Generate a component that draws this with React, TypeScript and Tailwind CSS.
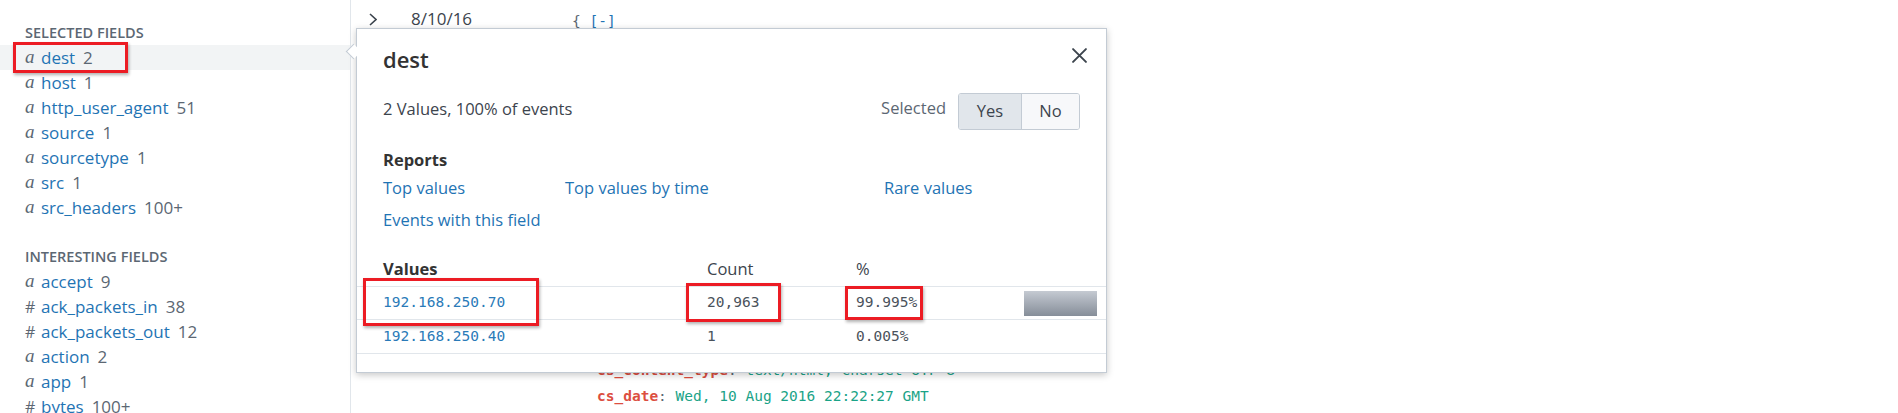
import React from "react";

const SANS = "font-['Open_Sans',sans-serif]";
const MONO = "font-['DejaVu_Sans_Mono',monospace]";

type Field = { type: "a" | "#"; name: string; count: string };

const selectedFields: Field[] = [
  { type: "a", name: "dest", count: "2" },
  { type: "a", name: "host", count: "1" },
  { type: "a", name: "http_user_agent", count: "51" },
  { type: "a", name: "source", count: "1" },
  { type: "a", name: "sourcetype", count: "1" },
  { type: "a", name: "src", count: "1" },
  { type: "a", name: "src_headers", count: "100+" },
];

const interestingFields: Field[] = [
  { type: "a", name: "accept", count: "9" },
  { type: "#", name: "ack_packets_in", count: "38" },
  { type: "#", name: "ack_packets_out", count: "12" },
  { type: "a", name: "action", count: "2" },
  { type: "a", name: "app", count: "1" },
  { type: "#", name: "bytes", count: "100+" },
];

const FieldRow = ({ field, active }: { field: Field; active?: boolean }) => (
  <div
    className={`flex items-center h-[25px] pl-[25px] text-[17px] ${
      active ? "bg-[#f2f4f5]" : ""
    }`}
  >
    <span
      className={`w-[16px] text-[#5c6773] ${
        field.type === "a"
          ? "font-['Liberation_Serif',serif] italic text-[19px]"
          : "text-[16px]"
      }`}
    >
      {field.type}
    </span>
    <span className="text-[#1f74b4]">{field.name}</span>
    <span className="ml-[8px] text-[#5c6773]">{field.count}</span>
  </div>
);

const SectionTitle = ({ children }: { children: React.ReactNode }) => (
  <div className="h-[25px] flex items-center pl-[25px] text-[14.5px] font-semibold uppercase text-[#5c6773]">
    {children}
  </div>
);

const RedBox = ({ className }: { className: string }) => (
  <div
    className={`absolute border-[3px] border-[#ec1c24] shadow-[1px_2px_3px_rgba(0,0,0,0.3)] pointer-events-none ${className}`}
  />
);

const JsonLine = ({ k, v }: { k: string; v: string }) => (
  <div className="h-[26px] leading-[26px] whitespace-pre">
    <span className="text-[#dc4e41] font-semibold">{k}</span>
    <span className="text-[#5c6773]">: </span>
    <span className="text-[#1aa387]">{v}</span>
  </div>
);

const Popover = () => (
  <div className="absolute left-[356px] top-[28px] w-[751px] h-[345px] bg-white border border-[#c3cbd4] shadow-[0_2px_7px_rgba(0,0,0,0.22)] z-10">
    {/* arrow pointing at the selected field */}
    <div className="absolute left-[-9px] top-[17px] w-[11px] h-[11px] rotate-45 bg-white border-l border-b border-[#c3cbd4]" />

    <button className="absolute right-[19px] top-[19px] w-[15px] h-[15px] text-[#3c444d]">
      <svg viewBox="0 0 14 14" className="w-full h-full">
        <path d="M1 1 L13 13 M13 1 L1 13" stroke="currentColor" strokeWidth="1.8" strokeLinecap="round" />
      </svg>
    </button>

    <div className="px-[26px]">
      <div className="pt-[16px] h-[44px] text-[22px] leading-[28px] font-semibold text-[#333]">dest</div>

      <div className="mt-[20px] flex items-center justify-between h-[37px]">
        <span className="text-[16.5px] text-[#3c444d] mb-[5px]">2 Values, 100% of events</span>
        <div className="flex items-center">
          <span className="text-[16.5px] text-[#5c6773] mr-[12px] mb-[6px]">Selected</span>
          <div className="flex h-[37px] rounded-[3px] border border-[#c3cbd4] overflow-hidden text-[16.5px] text-[#3c444d]">
            <div className="w-[63px] flex items-center justify-center bg-[#e1e6eb] border-r border-[#c3cbd4]">Yes</div>
            <div className="w-[57px] flex items-center justify-center bg-[#f7f8fa]">No</div>
          </div>
        </div>
      </div>

      <div className="mt-[18px] h-[24px] leading-[24px] text-[16.5px] font-bold text-[#333]">Reports</div>
      <div className="mt-[4px] grid grid-cols-[182px_319px_1fr] gap-y-[8px] text-[16.5px] leading-[24px] text-[#1f74b4]">
        <span>Top values</span>
        <span>Top values by time</span>
        <span>Rare values</span>
        <span>Events with this field</span>
      </div>
    </div>

    <div className="mt-[21px]">
      <div className="grid grid-cols-[350px_149px_168px_73px_1fr] h-[34px] items-center border-b border-[#e1e6eb] text-[16.5px] text-[#3c444d]">
        <span className="pl-[26px] font-bold text-[#333]">Values</span>
        <span>Count</span>
        <span>%</span>
        <span />
        <span />
      </div>
      {[
        { v: "192.168.250.70", c: "20,963", p: "99.995%", w: 100 },
        { v: "192.168.250.40", c: "1", p: "0.005%", w: 0 },
      ].map((r, i) => (
        <div
          key={r.v}
          className={`grid grid-cols-[350px_149px_168px_73px_1fr] items-center border-b border-[#e1e6eb] text-[14.5px] ${MONO} ${
            i === 0 ? "h-[33px]" : "h-[34px]"
          }`}
        >
          <span className="pl-[26px] text-[#2a7ab8]">{r.v}</span>
          <span className="text-[#4a525b]">{r.c}</span>
          <span className="text-[#4a525b]">{r.p}</span>
          <span className="h-[25px] flex">
            {r.w > 0 && (
              <span
                className="h-full bg-gradient-to-b from-[#c5cad2] to-[#868e99]"
                style={{ width: `${r.w}%` }}
              />
            )}
          </span>
          <span />
        </div>
      ))}
    </div>
  </div>
);

export default function App() {
  return (
    <div className={`relative w-[1898px] h-[413px] overflow-hidden bg-white flex ${SANS}`}>
      <aside className="w-[351px] shrink-0 border-r border-[#e1e6eb] pt-[20px]">
        <SectionTitle>Selected Fields</SectionTitle>
        {selectedFields.map((f, i) => (
          <FieldRow key={f.name} field={f} active={i === 0} />
        ))}
        <div className="h-[24px]" />
        <SectionTitle>Interesting Fields</SectionTitle>
        {interestingFields.map((f) => (
          <FieldRow key={f.name} field={f} />
        ))}
      </aside>

      <main className="flex-1 flex flex-col">
        <div className="h-[38px] flex items-center pl-[18px]">
          <svg viewBox="0 0 8 13" className="w-[8px] h-[13px] text-[#3c444d]">
            <path d="M1 1 L7 6.5 L1 12" fill="none" stroke="currentColor" strokeWidth="1.6" />
          </svg>
          <span className="ml-[34px] w-[161px] text-[17px] text-[#3c444d]">8/10/16</span>
          <span className={`${MONO} text-[14.5px] mt-[6px] text-[#5c6773] whitespace-pre`}>
            {"{ "}
            <span className="text-[#1f74b4]">[-]</span>
          </span>
        </div>
        <div className="h-[319px]" />
        <div className={`${MONO} text-[14.5px] pl-[246px]`}>
          <JsonLine k="cs_content_type" v="text/html; charset=UTF-8" />
          <JsonLine k="cs_date" v="Wed, 10 Aug 2016 22:22:27 GMT" />
        </div>
      </main>

      <Popover />

      <RedBox className="left-[13px] top-[42px] w-[115px] h-[31px] z-20" />
      <RedBox className="left-[363px] top-[278px] w-[176px] h-[48px] z-20" />
      <RedBox className="left-[686px] top-[283px] w-[95px] h-[39px] z-20" />
      <RedBox className="left-[845px] top-[286px] w-[78px] h-[34px] z-20" />
    </div>
  );
}
